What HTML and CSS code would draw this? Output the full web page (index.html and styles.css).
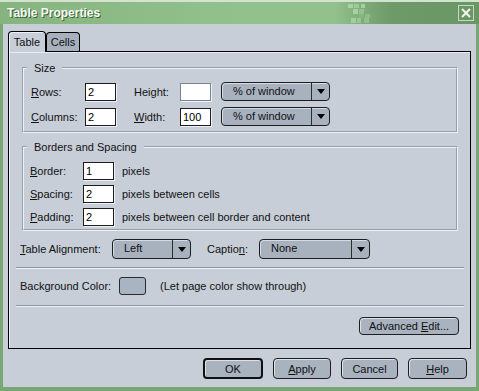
FILE: index.html
```html
<!DOCTYPE html>
<html lang="en">
<head>
    <meta charset="UTF-8">
    <title>Table Properties</title>
    <link rel="stylesheet" href="styles.css">
</head>
<body>
<div class="window">
    <div class="titlebar">
        <span class="title">Table Properties</span>
        <svg class="checker" width="26" height="20" viewBox="0 0 26 20">
            <rect x="0" y="1" width="5" height="4" fill="#a9d2a2"/>
            <rect x="6" y="1" width="5" height="4" fill="#9ccb96"/>
            <rect x="13" y="1" width="4" height="4" fill="#a2cf9b"/>
            <rect x="5" y="6" width="5" height="5" fill="#a6d09f"/>
            <rect x="11" y="6" width="5" height="5" fill="#94c28e"/>
            <rect x="17" y="11" width="5" height="4" fill="#8fbd89"/>
            <rect x="11" y="11" width="5" height="4" fill="#87b581"/>
            <rect x="3" y="15" width="5" height="5" fill="#a4ce9d"/>
            <rect x="9" y="15" width="4" height="5" fill="#9ac794"/>
            <rect x="16" y="15" width="5" height="5" fill="#92c08c"/>
        </svg>
        <span class="close">
            <svg width="14" height="14" viewBox="0 0 14 14">
                <path d="M3 3 L11 11 M11 3 L3 11" stroke="#f2f7f0" stroke-width="2" fill="none"/>
            </svg>
        </span>
    </div>

    <div class="client">
        <div class="tabs">
            <div class="tab tab-active">Table</div>
            <div class="tab tab-cells">Cells</div>
        </div>

        <div class="panel">
            <fieldset class="group">
                <legend>Size</legend>
                <div class="size-grid">
                    <label><u>R</u>ows:</label>
                    <input class="field" type="text" value="2">
                    <label>Hei<u>g</u>ht:</label>
                    <input class="field field-dim" type="text" value="">
                    <div class="select select-size"><span class="select-value">% of window</span><span class="select-arrow"></span></div>

                    <label><u>C</u>olumns:</label>
                    <input class="field" type="text" value="2">
                    <label><u>W</u>idth:</label>
                    <input class="field" type="text" value="100">
                    <div class="select select-size"><span class="select-value">% of window</span><span class="select-arrow"></span></div>
                </div>
            </fieldset>

            <fieldset class="group group-spacing">
                <legend>Borders and Spacing</legend>
                <div class="spacing-grid">
                    <label><u>B</u>order:</label>
                    <input class="field" type="text" value="1">
                    <span>pixels</span>

                    <label><u>S</u>pacing:</label>
                    <input class="field" type="text" value="2">
                    <span>pixels between cells</span>

                    <label><u>P</u>adding:</label>
                    <input class="field" type="text" value="2">
                    <span>pixels between cell border and content</span>
                </div>
            </fieldset>

            <div class="align-row">
                <label class="lbl-align"><u>T</u>able Alignment:</label>
                <div class="select select-align"><span class="select-value">Left</span><span class="select-arrow"></span></div>
                <label class="lbl-caption">Captio<u>n</u>:</label>
                <div class="select select-caption"><span class="select-value">None</span><span class="select-arrow"></span></div>
            </div>

            <hr class="sep">

            <div class="bg-row">
                <span class="lbl-bg">Background Color:</span>
                <span class="swatch"></span>
                <span class="bg-note">(Let page color show through)</span>
            </div>

            <hr class="sep sep-last">

            <button class="btn btn-advanced">Advanced <u>E</u>dit...</button>
        </div>

        <div class="actions">
            <button class="btn btn-default btn-ok">OK</button>
            <button class="btn btn-apply"><u>A</u>pply</button>
            <button class="btn btn-cancel">Cancel</button>
            <button class="btn btn-help"><u>H</u>elp</button>
        </div>
    </div>
</div>
</body>
</html>
```

FILE: styles.css
```css
* {
    box-sizing: border-box;
}
body {
    margin: 0;
    font-family: "Liberation Sans", Arial, sans-serif;
    font-size: 11px;
    color: #111;
    background-color: #c8ced8;
}
u {
    text-decoration-thickness: 1px;
    text-underline-offset: 1px;
}
.window {
    width: 479px;
    height: 391px;
    display: flex;
    flex-direction: column;
    border-top: 2px solid #d3e3cf;
}

/* title bar */
.titlebar {
    height: 22px;
    flex: none;
    display: flex;
    align-items: center;
    padding: 0 5px 0 7px;
    background: linear-gradient(to right, #86b47f 0%, #92c28c 50%, #92c18c 70%, #7eab78 76%, #6d9a68 82%, #6a9665 100%);
}
.title {
    font-weight: bold;
    font-size: 12px;
    color: #f6faf3;
    text-shadow: 1px 1px 0 #3c5c38;
}
.checker {
    margin-left: auto;
    margin-right: 84px;
}
.close {
    width: 16px;
    height: 16px;
    border: 1px solid #c4dbbf;
    display: flex;
    align-items: center;
    justify-content: center;
}

/* dialog body */
.client {
    flex: 1;
    display: flex;
    flex-direction: column;
    padding: 7px 5px 8px;
    border: 3px solid #79a773;
    border-top: none;
    border-bottom-width: 4px;
}
.tabs {
    display: flex;
    align-items: flex-end;
    height: 20px;
}
.tab {
    height: 19px;
    border: 1px solid #000;
    border-bottom: none;
    border-radius: 4px 4px 0 0;
    background-color: #a7b1be;
    text-align: center;
    line-height: 18px;
}
.tab-active {
    width: 38px;
    height: 21px;
    margin-bottom: -1px;
    line-height: 20px;
    background-color: #c8ced8;
    box-shadow: inset 1px 1px 0 #eef1f5;
    position: relative;
    z-index: 1;
}
.tab-cells {
    width: 34px;
}
.panel {
    flex: 1;
    display: flex;
    flex-direction: column;
    border: 1px solid #000;
    padding-top: 9px;
    box-shadow: inset 1px 1px 0 #e9edf2;
}

/* group boxes */
.group {
    margin: 0 12px 0 13px;
    padding: 0;
    border: 2px groove #eef1f5;
    min-width: 0;
}
.group legend {
    margin-left: 3px;
    padding: 0 7px;
    line-height: 14px;
}
.group-spacing {
    margin-top: 7px;
}
.size-grid {
    display: grid;
    grid-template-columns: 54px 49px 46px 41px 109px;
    grid-auto-rows: 19px;
    row-gap: 6px;
    align-items: center;
    padding: 7px 0 5px 7px;
}
.spacing-grid {
    display: grid;
    grid-template-columns: 53px 39px auto;
    grid-auto-rows: 18px;
    row-gap: 5px;
    align-items: center;
    padding: 8px 0 3px 6px;
}
.field {
    width: 31px;
    height: 18px;
    margin: 0;
    padding: 0 2px;
    border: 1px solid #1c1c1c;
    background-color: #fff;
    font: inherit;
    color: #000;
    box-shadow: 1px 1px 0 #eef1f5;
}
.field-dim {
    border-color: #7d838d;
}

/* drop-downs */
.select {
    display: flex;
    height: 19px;
    border: 1px solid #1e1e1e;
    border-radius: 4px;
    background-color: #a8b2bf;
    box-shadow: inset 1px 1px 0 #d6dce3;
}
.select-value {
    flex: 1;
    padding-left: 11px;
    line-height: 17px;
}
.select-arrow {
    width: 18px;
    border-left: 1px solid #2c2c2c;
    display: flex;
    align-items: center;
    justify-content: center;
}
.select-arrow::before {
    content: "";
    border-left: 4px solid transparent;
    border-right: 4px solid transparent;
    border-top: 5px solid #000;
}
.select-size {
    width: 109px;
}
.select-align {
    width: 79px;
    height: 20px;
}
.select-caption {
    width: 111px;
    height: 20px;
}
.align-row {
    display: flex;
    align-items: center;
    height: 20px;
    margin: 8px 0 0 11px;
}
.lbl-align {
    width: 92px;
}
.lbl-caption {
    width: 52px;
    margin-left: 16px;
}
.sep {
    height: 2px;
    margin: 8px 6px 0 7px;
    border: 0;
    border-top: 1px solid #8e959f;
    border-bottom: 1px solid #eef1f5;
}
.sep-last {
    margin-top: 10px;
}
.bg-row {
    display: flex;
    align-items: center;
    height: 18px;
    margin: 8px 0 0 11px;
}
.lbl-bg {
    width: 99px;
}
.swatch {
    width: 27px;
    height: 18px;
    border: 1px solid #2a2a2a;
    border-radius: 3px;
    background-color: #a9b4c2;
}
.bg-note {
    margin-left: 14px;
}

/* buttons */
.btn {
    height: 21px;
    padding: 0;
    font: inherit;
    color: #111;
    border: 1px solid #1f1f1f;
    border-radius: 4px;
    background-color: #a9b3c0;
    box-shadow: inset 1px 1px 0 #dce1e7;
}
.btn-advanced {
    align-self: flex-end;
    width: 100px;
    height: 18px;
    margin: 10px 11px 0 0;
}
.btn-default {
    border-width: 2px;
    border-color: #111;
}
.actions {
    display: flex;
    justify-content: flex-end;
    gap: 10px;
    margin-top: 9px;
    padding-right: 4px;
}
.btn-ok {
    width: 60px;
}
.btn-apply {
    width: 58px;
}
.btn-cancel {
    width: 57px;
}
.btn-help {
    width: 59px;
}
```
